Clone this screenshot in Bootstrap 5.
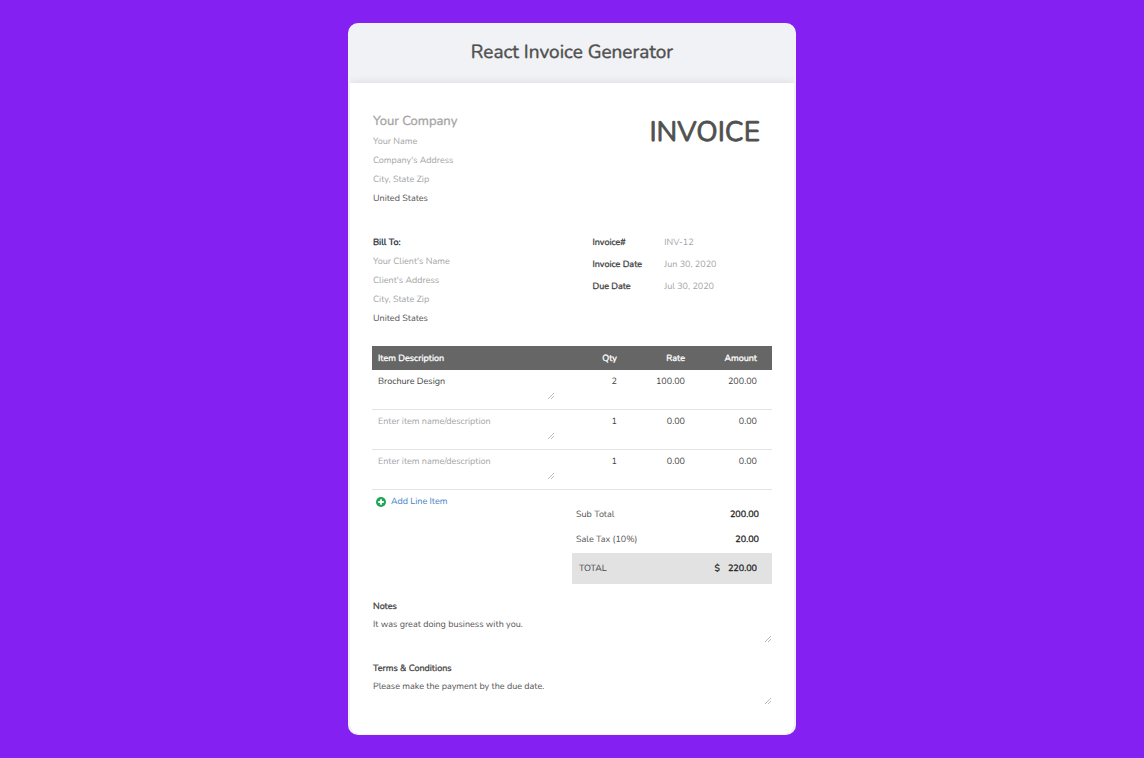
<!DOCTYPE html>
<html lang="en">
<head>
<meta charset="utf-8">
<meta name="viewport" content="width=device-width, initial-scale=1">
<title>React Invoice Generator</title>
<link href="https://cdn.jsdelivr.net/npm/bootstrap@5.3.0/dist/css/bootstrap.min.css" rel="stylesheet">
<style>
  body { background: #8520f3; font-family: Nunito, Lato, "Noto Sans", sans-serif; font-size: 9px; line-height: 19px; color: #555; text-rendering: geometricPrecision; }
  .page-pad { padding-top: 23px; padding-bottom: 24px; }
  .invoice-shell { max-width: 448px; background: #f1f2f5; border-radius: 10px; padding: 0 2px 1px; }
  .app-title { font-size: 19px; line-height: 24px; font-weight: 400; color: #505050; padding: 17px 0 19px; -webkit-text-stroke: .4px; }
  .sheet { background: #fff; border-radius: 0 0 9px 9px; box-shadow: 0 0 10px rgba(40, 50, 70, .12); padding: 26px 22px 30px; clip-path: inset(-12px 0 0 0 round 0 0 9px 9px); }
  .field { display: block; width: 100%; border: 0; padding: 0; background: transparent; color: #555; font: inherit; line-height: 19px; height: 19px; border-radius: 0; appearance: none; text-rendering: inherit; }
  .field::placeholder { color: #a4a4a4; opacity: 1; }
  .field-company { font-size: 13px; height: 24px; line-height: 24px; -webkit-text-stroke: .3px; }
  .field-title { font-size: 28px; height: 38px; line-height: 38px; color: #505050; text-align: right; padding-right: 12px; -webkit-text-stroke: .8px; }
  textarea.field { resize: none; overflow: hidden; background: url("data:image/svg+xml,%3Csvg xmlns='http://www.w3.org/2000/svg' width='6' height='6' viewBox='0 0 6 6'%3E%3Cpath d='M0 6 6 0M3 6 6 3' stroke='%23aaa' stroke-width='.8'/%3E%3C/svg%3E") no-repeat right 1px bottom; }
  .strong-text, .meta-label, .items th, .sum-value { font-weight: 400; color: #444; -webkit-text-stroke: .3px; }
  .bill-to { color: #222b3a; }
  .inset-left { padding-left: 1px; }
  .parties { margin-top: 25px; }
  .meta-grid { flex: 0 0 45%; gap: 3px; align-content: start; }
  .meta-label { width: 40%; }
  .items { table-layout: fixed; margin-top: 17px; width: 100%; border-collapse: separate; border-spacing: 0; }
  .items th { background: #666; color: #fff; height: 24px; padding: 2px 15px 0 0; text-align: right; }
  .items td { height: 40px; padding: 3px 15px 0 0; vertical-align: top; border-bottom: 1px solid #e3e3e3; text-align: right; color: #444; }
  .items th:first-child { padding-left: 6px; text-align: left; }
  .items td:first-child { padding: 3px 9px 0 6px; text-align: left; }
  .items td .field { color: #444; }
  .items textarea.field { height: 26px; }
  .items .num { text-align: right; }
  .add-line { color: #3f83c8; border: 0; background: none; padding: 0 4px; height: 24px; gap: 5px; text-rendering: inherit; }
  .sum-row { height: 25px; padding: 2px 13px 0 4px; }
  .sum-value { color: #222; }
  .grand { background: #e2e2e2; height: 31px; padding: 1px 15px 0 7px; margin-top: 1px; color: #444; }
  .note-block { padding-top: 14px; }
  .note-block + .note-block { padding-top: 18px; }
  .note-block label { line-height: 18px; }
  .note-block .field { height: 26px; }
</style>
</head>
<body>
<main class="container-fluid page-pad">
  <div class="invoice-shell mx-auto">
    <h1 class="app-title text-center m-0">React Invoice Generator</h1>
    <form class="sheet">
      <div class="row g-0 inset-left">
        <div class="col-6">
          <input class="field field-company" placeholder="Your Company" aria-label="Your company">
          <input class="field" placeholder="Your Name" aria-label="Your name">
          <input class="field" placeholder="Company's Address" aria-label="Company address">
          <input class="field" placeholder="City, State Zip" aria-label="Company city">
          <input class="field" value="United States" aria-label="Company country">
        </div>
        <div class="col-6 pt-1">
          <input class="field field-title" value="INVOICE" aria-label="Document title">
        </div>
      </div>

      <div class="row g-0 inset-left parties">
        <div class="col">
          <input class="field strong-text bill-to" value="Bill To:" aria-label="Bill to heading">
          <input class="field" placeholder="Your Client's Name" aria-label="Client name">
          <input class="field" placeholder="Client's Address" aria-label="Client address">
          <input class="field" placeholder="City, State Zip" aria-label="Client city">
          <input class="field" value="United States" aria-label="Client country">
        </div>
        <div class="col d-grid meta-grid">
          <div class="d-flex"><label class="meta-label" for="number">Invoice#</label><input id="number" class="field w-50" placeholder="INV-12"></div>
          <div class="d-flex"><label class="meta-label" for="issued">Invoice Date</label><input id="issued" class="field w-50" placeholder="Jun 30, 2020"></div>
          <div class="d-flex"><label class="meta-label" for="due">Due Date</label><input id="due" class="field w-50" placeholder="Jul 30, 2020"></div>
        </div>
      </div>

      <table class="items">
        <colgroup><col style="width:48%"><col style="width:17%"><col style="width:17%"><col style="width:18%"></colgroup>
        <thead><tr><th>Item Description</th><th>Qty</th><th>Rate</th><th>Amount</th></tr></thead>
        <tbody>
          <tr>
            <td><textarea class="field" placeholder="Enter item name/description" aria-label="Item 1 description">Brochure Design</textarea></td>
            <td><input class="field num" value="2" aria-label="Item 1 quantity"></td>
            <td><input class="field num" value="100.00" aria-label="Item 1 rate"></td>
            <td>200.00</td>
          </tr>
          <tr>
            <td><textarea class="field" placeholder="Enter item name/description" aria-label="Item 2 description"></textarea></td>
            <td><input class="field num" value="1" aria-label="Item 2 quantity"></td>
            <td><input class="field num" value="0.00" aria-label="Item 2 rate"></td>
            <td>0.00</td>
          </tr>
          <tr>
            <td><textarea class="field" placeholder="Enter item name/description" aria-label="Item 3 description"></textarea></td>
            <td><input class="field num" value="1" aria-label="Item 3 quantity"></td>
            <td><input class="field num" value="0.00" aria-label="Item 3 rate"></td>
            <td>0.00</td>
          </tr>
        </tbody>
      </table>

      <div class="row g-0">
        <div class="col-6">
          <button type="button" class="add-line d-flex align-items-center">
            <svg width="10" height="10" viewBox="0 0 22 22" aria-hidden="true"><circle cx="11" cy="11" r="11" fill="#1ea555"/><path d="M11 5v12M5 11h12" stroke="#fff" stroke-width="4"/></svg>
            Add Line Item
          </button>
        </div>
        <div class="col-6 pt-2 mt-1">
          <div class="sum-row d-flex justify-content-between align-items-center"><span>Sub Total</span><span class="sum-value">200.00</span></div>
          <div class="sum-row d-flex justify-content-between align-items-center"><span>Sale Tax (10%)</span><span class="sum-value">20.00</span></div>
          <div class="grand d-flex align-items-center"><span class="me-auto">TOTAL</span><span class="sum-value me-2">$</span><span class="sum-value">220.00</span></div>
        </div>
      </div>

      <div class="note-block inset-left">
        <label class="strong-text d-block" for="notes">Notes</label>
        <textarea id="notes" class="field">It was great doing business with you.</textarea>
      </div>
      <div class="note-block inset-left">
        <label class="strong-text d-block" for="terms">Terms &amp; Conditions</label>
        <textarea id="terms" class="field">Please make the payment by the due date.</textarea>
      </div>
    </form>
  </div>
</main>
<script src="https://cdn.jsdelivr.net/npm/bootstrap@5.3.0/dist/js/bootstrap.bundle.min.js"></script>
</body>
</html>
